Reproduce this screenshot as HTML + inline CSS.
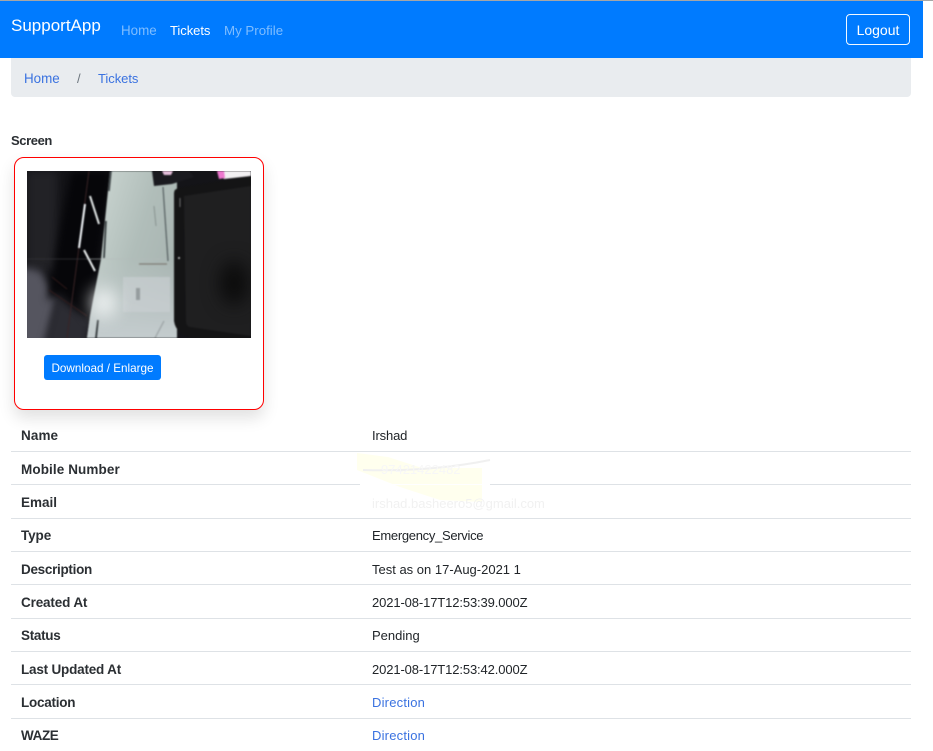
<!DOCTYPE html>
<html><head><meta charset="utf-8"><style>
html,body{margin:0;padding:0;background:#fff;width:933px;height:751px;overflow:hidden}
body{position:relative;font-family:"Liberation Sans",sans-serif;font-size:13px;color:#212529}
.a{position:absolute;white-space:nowrap;line-height:20px}
.h{height:1px;background:#dee2e6;position:absolute;left:11px;width:900px}
.k{left:21px;font-weight:700;color:#2b2f33;font-size:13.5px}
.v{left:372px}
a{color:#3a72e0;text-decoration:none}
</style></head><body>
<div class="a" style="left:0;top:0;width:933px;height:1px;background:#a6a6a6"></div>
<div class="a" style="left:0;top:1px;width:923px;height:57px;background:#007bff"></div>
<div class="a" style="left:11px;top:16px;font-size:17px;color:#fff">SupportApp</div>
<div class="a" style="left:121px;top:21px;font-size:13.4px;color:#7fbdff">Home</div>
<div class="a" style="left:170px;top:21px;font-size:13px;color:#fff;letter-spacing:-.05px">Tickets</div>
<div class="a" style="left:224px;top:21px;font-size:13.3px;color:#7fbdff">My Profile</div>
<div class="a" style="left:846px;top:14px;width:62px;height:29px;border:1px solid #f2f8ff;border-radius:4px;color:#fff;font-size:14px;text-align:center;line-height:31px">Logout</div>
<div class="a" style="left:11px;top:58px;width:900px;height:39px;background:#e9ecef;border-radius:0 0 4px 4px"></div>
<a class="a" style="left:24px;top:69px;font-size:13.4px">Home</a>
<div class="a" style="left:77px;top:69px;color:#6c757d">/</div>
<a class="a" style="left:98px;top:69px;font-size:13px;letter-spacing:-.05px">Tickets</a>
<div class="a" style="left:11px;top:131px;font-weight:700;color:#2b2f33;letter-spacing:-.4px">Screen</div>
<div class="a" style="left:14px;top:157px;width:248px;height:251px;border:1px solid #f00;border-radius:10px;background:#fff;box-shadow:0 8px 16px rgba(0,0,0,.12)"></div>
<svg class="a" style="left:27px;top:171px" width="224" height="167" viewBox="0 0 224 167">
<defs>
<linearGradient id="l" x1="0" y1="0" x2="1" y2=".6"><stop offset="0" stop-color="#d0dad6"/><stop offset=".6" stop-color="#b0bdb9"/><stop offset="1" stop-color="#a8b4b1"/></linearGradient>
<linearGradient id="m" x1="0" y1="0" x2="0" y2="1"><stop offset="0" stop-color="#c4ccce" stop-opacity="0"/><stop offset="1" stop-color="#c4ccce"/></linearGradient>
<filter id="b" color-interpolation-filters="sRGB" x="-10%" y="-10%" width="120%" height="120%"><feGaussianBlur stdDeviation=".8"/></filter>
<filter id="c" color-interpolation-filters="sRGB" x="-50%" y="-50%" width="200%" height="200%"><feGaussianBlur stdDeviation="4"/></filter>
<filter id="e" color-interpolation-filters="sRGB" filterUnits="userSpaceOnUse" x="-60" y="-60" width="344" height="287"><feGaussianBlur stdDeviation="9"/></filter>
<clipPath id="clip"><rect width="224" height="167"/></clipPath>
</defs>
<g clip-path="url(#clip)">
<rect width="224" height="167" fill="#141418"/>
<rect x="0" y="0" width="30" height="100" fill="#222226" filter="url(#c)"/>
<polygon points="-8,95 14,100 30,130 20,175 -8,175" fill="#55555f" filter="url(#c)"/>
<polygon points="30,125 64,150 60,175 16,175" fill="#2c2c33" filter="url(#c)"/>
<polygon points="44,0 86,0 62,150 34,120 20,130" fill="#060609" filter="url(#c)"/>
<g filter="url(#b)">
<line x1="62" y1="0" x2="40" y2="167" stroke="#3a2426" stroke-width="1"/>
<line x1="25" y1="106" x2="40" y2="118" stroke="#3c1e1d" stroke-width=".8"/>
<line x1="22" y1="119" x2="60" y2="145" stroke="#341d1d" stroke-width=".8"/>
<line x1="0" y1="88" x2="76" y2="88" stroke="#36363a" stroke-width=".7"/>
<polygon points="83,0 150,0 150,167 60,167 63,145 74,88" fill="url(#l)"/>
<polygon points="74,88 150,88 150,167 60,167 63,145" fill="url(#m)"/>
<rect x="96" y="106" width="47" height="35" fill="#cbd1d3" opacity=".6"/>
<line x1="58" y1="33" x2="52" y2="77" stroke="#f7fbff" stroke-width="2"/>
<line x1="63" y1="25" x2="72" y2="53" stroke="#e9eeee" stroke-width="2"/>
<line x1="57" y1="79" x2="68" y2="100" stroke="#eef2f2" stroke-width="2"/>
<line x1="84" y1="0" x2="82" y2="20" stroke="#3a4144" stroke-width="1.6"/>
<line x1="79" y1="50" x2="77" y2="87" stroke="#2d3336" stroke-width="1.6"/>
<line x1="71" y1="149" x2="69" y2="167" stroke="#2d3336" stroke-width="1.8"/>
<line x1="60" y1="88" x2="140" y2="88" stroke="#b3baba" stroke-width=".6"/>
<line x1="112" y1="93" x2="140" y2="93" stroke="#7e7b74" stroke-width="1.3"/>
<line x1="136" y1="16" x2="141" y2="90" stroke="#4c5557" stroke-width="1.1"/>
<line x1="127" y1="35" x2="129" y2="55" stroke="#77817f" stroke-width=".7"/>
<rect x="109" y="117" width="4" height="12" fill="#6f7678" opacity=".55"/>
<line x1="128" y1="167" x2="137" y2="150" stroke="#9aa1a3" stroke-width="1.2"/>
<polygon points="125,0 162,0 167,6 145,13 127,15" fill="#1a1a1f"/>
<polygon points="135,0 146,0 144,4 137,4" fill="#e6c0dc"/>
<polygon points="190,0 224,0 224,5 197,8" fill="#f2f0f2"/>
<polygon points="190,0 197,0 198,7 192,8" fill="#ee78cf"/>
<path d="M152 17 L224 5 V167 H170 Q149 165 147 150 V22 Q147 18 152 17Z" fill="#141415"/>
<path d="M157 25 L224 15 V165 L163 156 Q159 155 159 150Z" fill="#1f1f20"/>
<circle cx="152" cy="87" r="1" fill="#ccc"/>
<line x1="153" y1="27" x2="153" y2="36" stroke="#8a8a8a" stroke-width=".8"/>
</g>
<ellipse cx="77" cy="132" rx="12" ry="14" fill="#f2f5f5" filter="url(#e)"/>
<ellipse cx="207" cy="112" rx="14" ry="22" fill="#0b0b0b" filter="url(#e)"/>
</g>
</svg>
<div class="a" style="left:44px;top:355px;width:117px;height:25px;background:#007bff;border-radius:3px;color:#fff;font-size:11.7px;line-height:27px;text-align:center">Download / Enlarge</div>
<svg class="a" style="left:340px;top:445px" width="260" height="60" viewBox="0 0 260 60">
<polygon points="17,8 48,12 82,23 142,23 142,57 100,55 60,42 17,25" fill="#ffffee"/>
<path d="M23 25 Q90 27 150 15" stroke="#f0f0f0" stroke-width="2" fill="none"/>
</svg>
<div class="h" style="top:451px"></div><div class="h" style="top:484px"></div><div class="h" style="top:518px"></div><div class="h" style="top:551px"></div><div class="h" style="top:584px"></div><div class="h" style="top:618px"></div><div class="h" style="top:651px"></div><div class="h" style="top:684px"></div><div class="h" style="top:718px"></div>
<div class="a" style="left:360px;top:484px;width:130px;height:1px;background:#fff"></div>
<div class="a k" style="top:426px;letter-spacing:.1px">Name</div><div class="a v" style="top:426px;letter-spacing:-.15px">Irshad</div>
<div class="a k" style="top:460px;letter-spacing:.1px">Mobile Number</div><div class="a v" style="top:460px;color:#f7f7f7;left:381px">97421422482</div>
<div class="a k" style="top:493px">Email</div><div class="a v" style="top:494px;color:#f1f1f1">irshad.basheero5@gmail.com</div>
<div class="a k" style="top:526px;letter-spacing:-.1px">Type</div><div class="a v" style="top:526px;letter-spacing:-.3px">Emergency_Service</div>
<div class="a k" style="top:560px;letter-spacing:-.3px">Description</div><div class="a v" style="top:560px">Test as on 17-Aug-2021 1</div>
<div class="a k" style="top:593px;letter-spacing:-.15px">Created At</div><div class="a v" style="top:593px;letter-spacing:-.12px">2021-08-17T12:53:39.000Z</div>
<div class="a k" style="top:626px;letter-spacing:-.3px">Status</div><div class="a v" style="top:626px">Pending</div>
<div class="a k" style="top:660px;letter-spacing:-.2px">Last Updated At</div><div class="a v" style="top:660px;letter-spacing:-.12px">2021-08-17T12:53:42.000Z</div>
<div class="a k" style="top:693px;letter-spacing:-.25px">Location</div><a class="a v" style="top:693px;letter-spacing:.2px">Direction</a>
<div class="a k" style="top:726px;letter-spacing:-.4px">WAZE</div><a class="a v" style="top:726px;letter-spacing:.2px">Direction</a>
</body></html>
